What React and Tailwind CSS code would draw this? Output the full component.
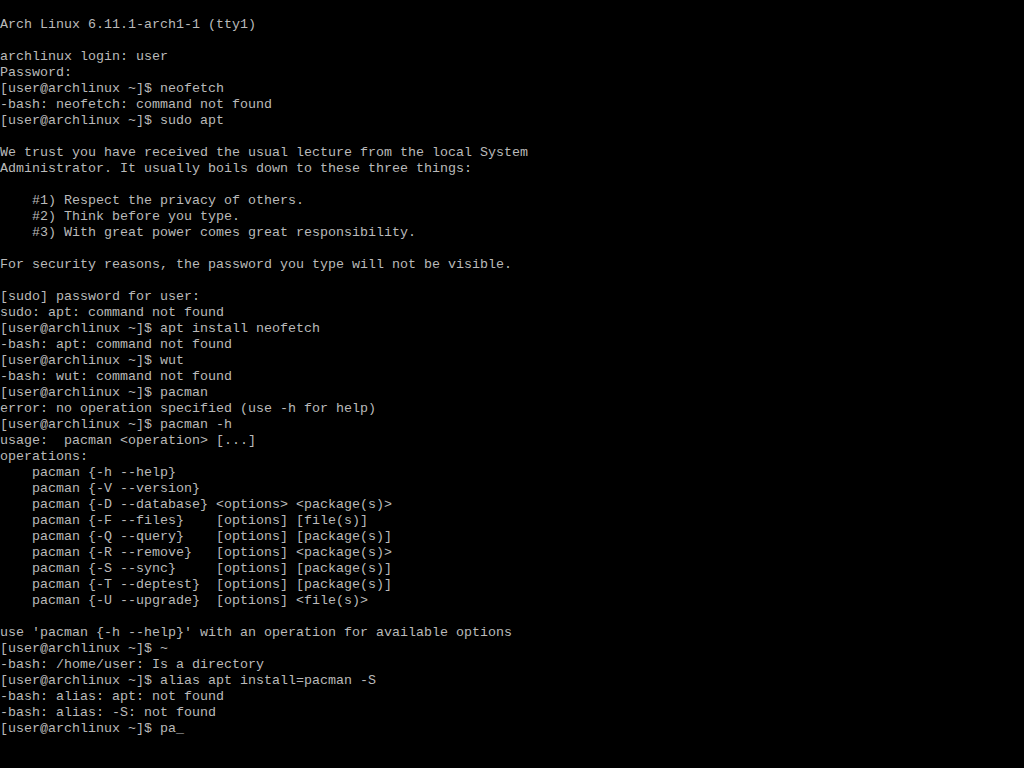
import React from "react";

const lines = [
    "Arch Linux 6.11.1-arch1-1 (tty1)",
    "",
    "archlinux login: user",
    "Password:",
    "[user@archlinux ~]$ neofetch",
    "-bash: neofetch: command not found",
    "[user@archlinux ~]$ sudo apt",
    "",
    "We trust you have received the usual lecture from the local System",
    "Administrator. It usually boils down to these three things:",
    "",
    "    #1) Respect the privacy of others.",
    "    #2) Think before you type.",
    "    #3) With great power comes great responsibility.",
    "",
    "For security reasons, the password you type will not be visible.",
    "",
    "[sudo] password for user:",
    "sudo: apt: command not found",
    "[user@archlinux ~]$ apt install neofetch",
    "-bash: apt: command not found",
    "[user@archlinux ~]$ wut",
    "-bash: wut: command not found",
    "[user@archlinux ~]$ pacman",
    "error: no operation specified (use -h for help)",
    "[user@archlinux ~]$ pacman -h",
    "usage:  pacman <operation> [...]",
    "operations:",
    "    pacman {-h --help}",
    "    pacman {-V --version}",
    "    pacman {-D --database} <options> <package(s)>",
    "    pacman {-F --files}    [options] [file(s)]",
    "    pacman {-Q --query}    [options] [package(s)]",
    "    pacman {-R --remove}   [options] <package(s)>",
    "    pacman {-S --sync}     [options] [package(s)]",
    "    pacman {-T --deptest}  [options] [package(s)]",
    "    pacman {-U --upgrade}  [options] <file(s)>",
    "",
    "use 'pacman {-h --help}' with an operation for available options",
    "[user@archlinux ~]$ ~",
    "-bash: /home/user: Is a directory",
    "[user@archlinux ~]$ alias apt install=pacman -S",
    "-bash: alias: apt: not found",
    "-bash: alias: -S: not found",
];

export default function App() {
    return (
        <div className="w-[1024px] h-[768px] bg-black overflow-hidden pt-[17px] text-[#bababa] font-['Liberation_Mono',monospace] text-[13.33px] leading-[16px]">
            {lines.map((line, i) => (
                <div key={i} className="h-[16px] whitespace-pre">{line}</div>
            ))}
            {/* current prompt with cursor */}
            <div className="h-[16px] whitespace-pre">[user@archlinux ~]$ pa<span>_</span></div>
        </div>
    );
}
